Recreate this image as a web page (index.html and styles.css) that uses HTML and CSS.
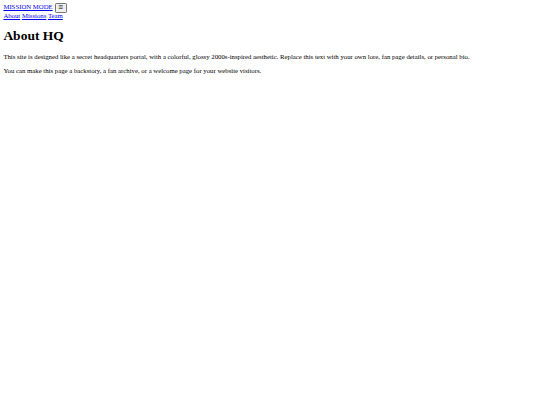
FILE: index.html
```html
<!DOCTYPE html>
<html lang="en">
<head>
<meta charset="utf-8">
<title>About HQ</title>
<link rel="stylesheet" href="styles.css">
</head>
<body class="page">
<header class="site-header">
  <div class="brand-row">
    <a class="brand" href="#">MISSION MODE</a>
    <button class="menu-toggle" type="button">☰</button>
  </div>
  <nav class="nav">
    <a href="#">About</a>
    <a href="#">Missions</a>
    <a href="#">Team</a>
  </nav>
</header>
<main class="content">
  <h1 class="title">About HQ</h1>
  <p class="text">This site is designed like a secret headquarters portal, with a colorful, glossy 2000s-inspired aesthetic. Replace this text with your own lore, fan page details, or personal bio.</p>
  <p class="text">You can make this page a backstory, a fan archive, or a welcome page for your website visitors.</p>
</main>
</body>
</html>
```
FILE: styles.css
```css
html {
  background: #fff;
}
.page {
  margin: 3.375px;
  font-family: "Liberation Serif", "Times New Roman", serif;
  font-size: 6.75px;
  color: #000;
}
.site-header a {
  color: #0000ee;
}
.menu-toggle {
  font-family: "DejaVu Sans", sans-serif;
  font-size: 5.625px;
  line-height: 7px;
  padding: 0.8px 2.3px;
  border: 0.6px solid #767676;
  border-radius: 1.2px;
  background: #efefef;
  color: #000;
  margin: -2px 0 -1px 0.5px;
  vertical-align: baseline;
}
.title {
  font-size: 13.5px;
  margin: 9.05px 0;
  font-weight: bold;
}
.text {
  margin: 6.75px 0;
}
```
